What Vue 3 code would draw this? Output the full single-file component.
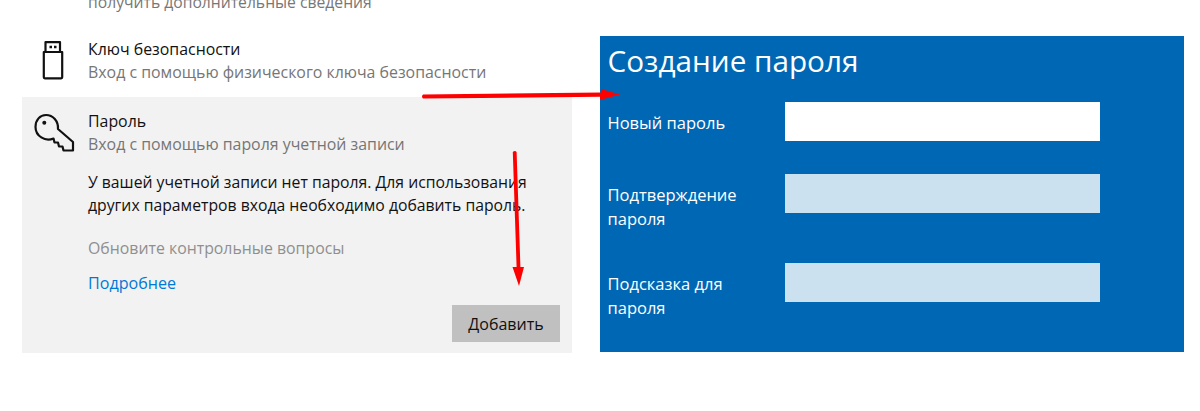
<script setup>
const fields = [
  { label: ['Новый пароль'], cls: 'white', h: 72 },
  { label: ['Подтверждение', 'пароля'], cls: 'pale', h: 89 },
  { label: ['Подсказка для', 'пароля'], cls: 'pale', h: 50 },
]
</script>

<template>
  <div class="page">
    <div class="left">
      <div class="cut">получить дополнительные сведения</div>
      <div class="row">
        <div class="ico">
          <svg width="36" height="42" viewBox="0 0 36 42" fill="none" stroke="#111" stroke-width="2.2" stroke-linejoin="round">
            <path d="M8.5 1.2H23V11H8.5Z" />
            <path d="M6.8 11H25.2V36.3Q25.2 37.3 24.2 37.3H7.8Q6.8 37.3 6.8 36.3Z" />
            <path d="M12.5 6H15M17 6H19.5" stroke-width="2.6" />
          </svg>
        </div>
        <div>
          <div class="title">Ключ безопасности</div>
          <div class="sub">Вход с помощью физического ключа безопасности</div>
        </div>
      </div>
      <div class="card">
        <div class="row inner">
          <div class="ico">
            <svg width="42" height="42" viewBox="0 0 42 42" fill="none" stroke="#111" stroke-width="2.2" stroke-linejoin="round">
              <path d="M13 3C20 3 25.5 9 25 17L40 30V38.5H30.5L29.5 34.5H26L25 30.5H21.5L20.5 26.5C12 30 2.5 24 2.5 15C2.5 8 7 3 13 3Z" />
              <circle cx="11.3" cy="10.7" r="2" fill="#111" stroke="none" />
            </svg>
          </div>
          <div>
            <div class="title">Пароль</div>
            <div class="sub">Вход с помощью пароля учетной записи</div>
          </div>
        </div>
        <p class="msg">У вашей учетной записи нет пароля. Для использования<br />других параметров входа необходимо добавить пароль.</p>
        <div class="muted">Обновите контрольные вопросы</div>
        <div class="link">Подробнее</div>
        <div class="actions"><button class="btn">Добавить</button></div>
      </div>
    </div>

    <div class="panel">
      <h1>Создание пароля</h1>
      <div v-for="f in fields" :key="f.label[0]" class="field" :style="{ height: f.h + 'px' }">
        <div class="lbl"><div v-for="l in f.label" :key="l">{{ l }}</div></div>
        <div class="box" :class="f.cls"></div>
      </div>
    </div>

    <svg class="arrows" width="1200" height="411" viewBox="0 0 1200 411" fill="#ff0000">
      <path d="M423 94.6L601 92.4V89L620 94.5L600 100V96.8L423 98.6Q421 96.6 423 94.6Z" />
      <path d="M512.8 152Q515 150 516.6 152L520.4 267H524L519 286L512.5 267H516.6Z" />
    </svg>
  </div>
</template>

<style>
html, body { margin: 0; background: #fff; }
</style>

<style scoped>
.page {
  position: relative;
  width: 1200px;
  height: 411px;
  overflow: hidden;
  display: flex;
  align-items: flex-start;
  font-family: "Open Sans", "Noto Sans", sans-serif;
  background: #fff;
}
.left { width: 550px; margin-left: 22px; }
.cut {
  margin: -9px 0 0 66px;
  height: 46px;
  line-height: 22px;
  font-size: 15.7px;
  color: #777;
}
.row { display: flex; }
.ico { width: 66px; display: flex; justify-content: center; padding-top: 4px; box-sizing: border-box; }
.inner { padding-top: 12px; }
.inner .ico { padding-top: 3px; justify-content: flex-start; padding-left: 11px; }
.title { font-size: 15.9px; line-height: 24px; color: #111; }
.sub { font-size: 15.9px; line-height: 23px; color: #767676; white-space: nowrap; }
.card { margin-top: 13px; height: 256px; background: #f2f2f2; box-sizing: border-box; }
.msg { margin: 15px 0 0 66px; font-size: 15.75px; line-height: 23px; color: #111; white-space: nowrap; }
.muted { margin: 19px 0 0 66px; font-size: 15.85px; line-height: 24px; color: #8f8f8f; }
.link { margin: 11px 0 0 66px; font-size: 16.1px; line-height: 24px; color: #0078d7; }
.actions { display: flex; justify-content: flex-end; margin: 10px 12px 0 0; }
.btn {
  width: 108px;
  height: 37px;
  border: 0;
  padding: 0;
  background: #c0c0c0;
  color: #111;
  font: inherit;
  font-size: 16px;
}
.panel {
  margin: 35.5px 0 0 27.5px;
  width: 584.5px;
  height: 316px;
  box-sizing: border-box;
  background: #0067b5;
  color: #fff;
  padding: 5.5px 0 0 8px;
}
h1 { margin: 0 0 21px; font-size: 29.7px; line-height: 40px; font-weight: 400; }
.field { display: flex; }
.lbl { width: 177px; font-size: 16.5px; line-height: 24px; padding-top: 9px; box-sizing: border-box; }
.box { width: 315px; height: 39px; }
.white { background: #fff; }
.pale { background: #cce1f0; }
.arrows { position: absolute; left: 0; top: 0; pointer-events: none; }
</style>
